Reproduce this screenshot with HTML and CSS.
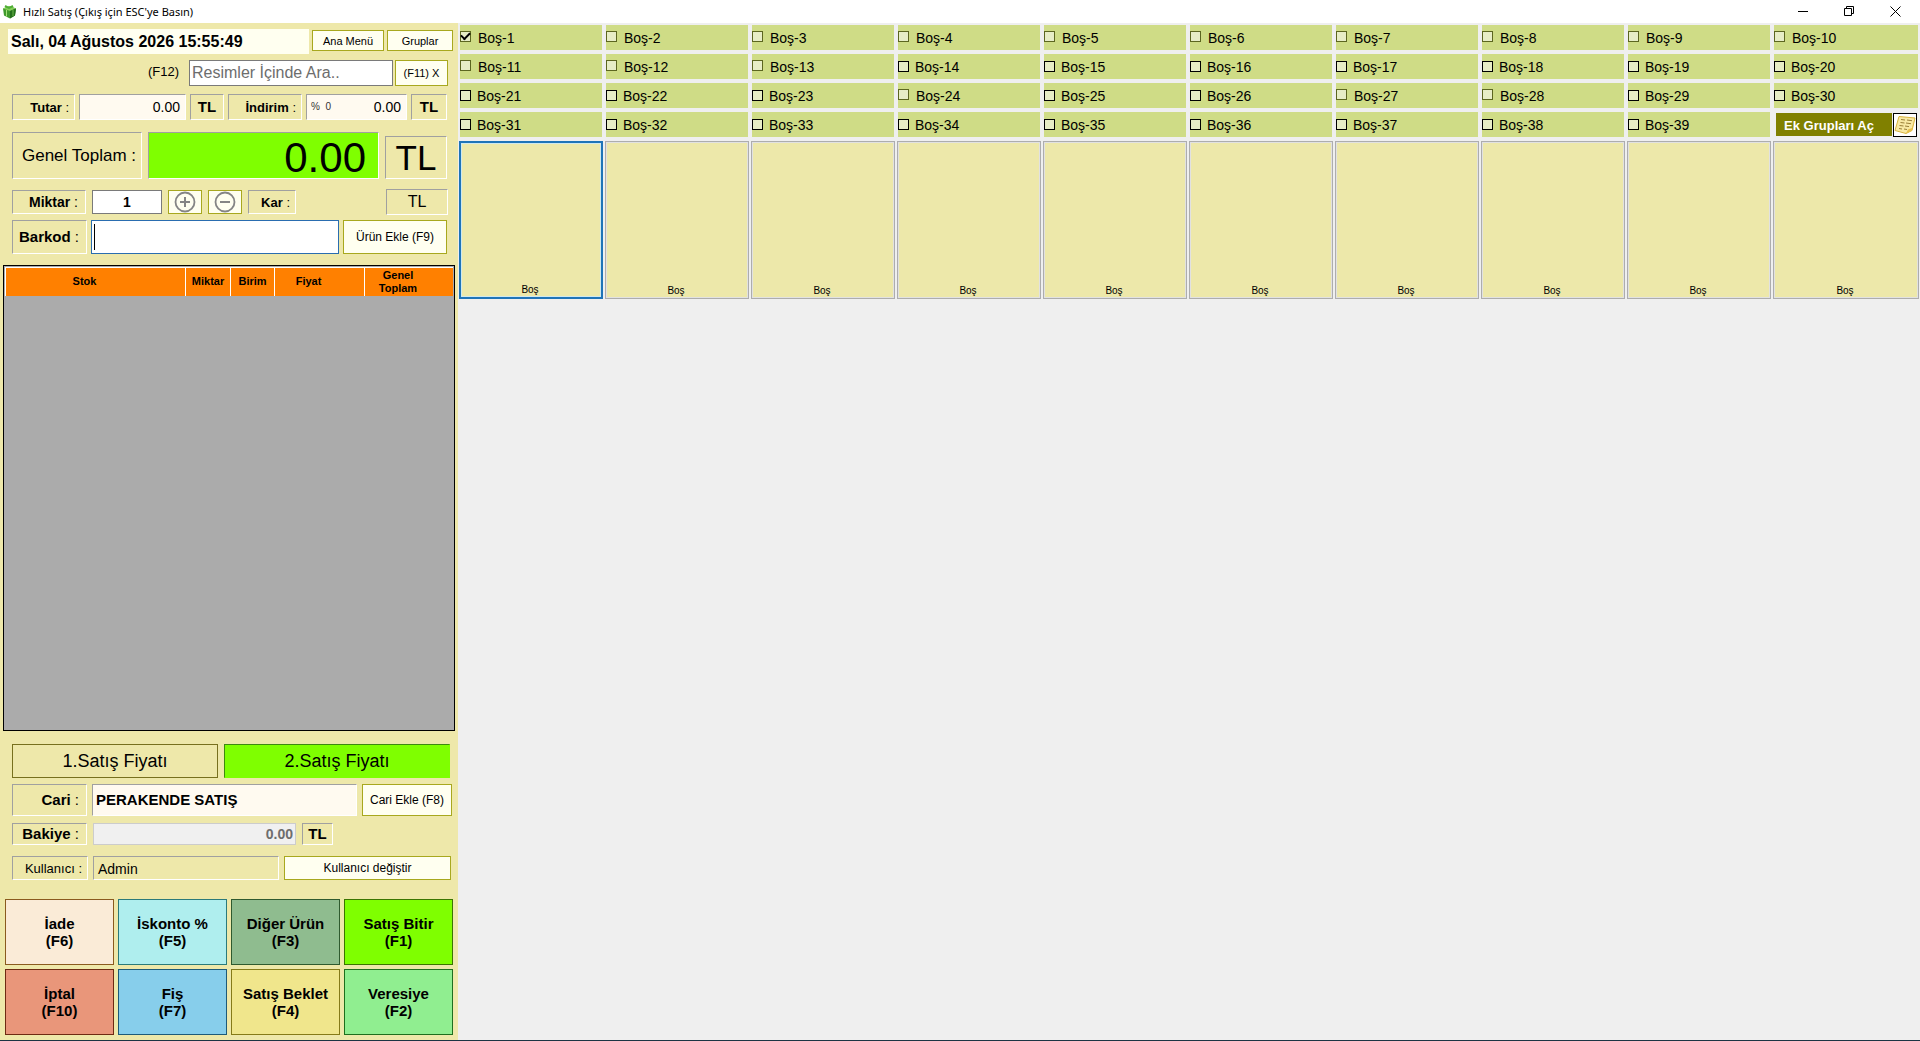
FILE: index.html
```html
<!DOCTYPE html>
<html lang="tr">
<head>
<meta charset="utf-8">
<title>Hızlı Satış</title>
<link rel="stylesheet" href="styles.css">
</head>
<body>
<header class="titlebar">
  <svg class="app-icon" width="15" height="15" viewBox="0 0 15 15" aria-hidden="true">
    <path d="M1 4.500 7.500 2 14 4.500 13 11.500 8 14.500 2 11.500z" fill="#3f9a2c"/>
    <path d="M1 4.500 7.500 2 14 4.500 8 7z" fill="#86cf5a"/>
    <path d="M8 7l6-2.500-1 7-5 3z" fill="#256f1c"/>
    <path d="M3.500 1l3.500 2 3.500-2 1 2-4.500 2-4.500-2z" fill="#4fae35"/>
    <path d="M4.500 6v6.500" stroke="#a5e07c"/>
    <path d="M11 6v6" stroke="#6dbb4a"/>
  </svg>
  <h1 class="title">Hızlı Satış (Çıkış için ESC'ye Basın)</h1>
  <div class="window-buttons">
    <button class="window-button" aria-label="Simge durumuna küçült"><svg width="11" height="11" viewBox="0 0 11 11"><path d="M0 5.500H10" stroke="#000"/></svg></button>
    <button class="window-button" aria-label="Önceki boyut"><svg width="11" height="11" viewBox="0 0 11 11"><path d="M.5 2.500H7.500V9.500H.5zM2.500 2.500V.5H9.500V7.500H7.500" fill="none" stroke="#000"/></svg></button>
    <button class="window-button" aria-label="Kapat"><svg width="11" height="11" viewBox="0 0 11 11"><path d="M.5.5l10 10M10.500.5l-10 10" stroke="#000"/></svg></button>
  </div>
</header>
<main class="workspace">
  <section class="sale">
    <div class="row row-date">
      <time class="date">Salı, 04 Ağustos 2026 15:55:49</time>
      <button class="btn small">Ana Menü</button>
      <button class="btn small">Gruplar</button>
    </div>
    <div class="row row-search">
      <label class="search-key" for="search">(F12)</label>
      <input class="field search" id="search" type="text" placeholder="Resimler İçinde Ara..">
      <button class="btn small">(F11) X</button>
    </div>
    <div class="row row-amount">
      <div class="sunken caption"><b>Tutar</b>&nbsp;:</div>
      <output class="sunken paper amount">0.00</output>
      <div class="sunken currency">TL</div>
      <div class="sunken caption"><b>İndirim</b>&nbsp;:</div>
      <output class="sunken paper amount discount"><span class="percent">%&nbsp; 0</span><span>0.00</span></output>
      <div class="sunken currency">TL</div>
    </div>
    <div class="row row-total">
      <div class="sunken total-caption">Genel Toplam&nbsp;:</div>
      <output class="sunken total">0.00</output>
      <div class="sunken total-currency">TL</div>
    </div>
    <div class="row row-quantity">
      <label class="sunken caption medium" for="quantity"><b>Miktar</b>&nbsp;:</label>
      <input class="field quantity" id="quantity" type="text" value="1">
      <button class="btn" aria-label="Artır"><svg width="22" height="22" viewBox="0 0 22 22"><circle cx="11" cy="11" r="9.500" fill="none" stroke="#858585" stroke-width="1.800"/><path d="M6 11H16M11 6V16" stroke="#858585" stroke-width="2"/></svg></button>
      <button class="btn" aria-label="Azalt"><svg width="22" height="22" viewBox="0 0 22 22"><circle cx="11" cy="11" r="9.500" fill="none" stroke="#858585" stroke-width="1.800"/><path d="M6 11H16" stroke="#858585" stroke-width="2"/></svg></button>
      <div class="sunken caption"><b>Kar</b>&nbsp;:</div>
      <div class="sunken currency profit">TL</div>
    </div>
    <div class="row row-barcode">
      <label class="sunken caption large" for="barcode"><b>Barkod</b>&nbsp;:</label>
      <div class="barcode-box"><span class="caret"></span><input class="barcode" id="barcode" type="text"></div>
      <button class="btn">Ürün Ekle (F9)</button>
    </div>
    <div class="basket">
      <table class="basket-table">
        <colgroup><col class="col-stock"><col class="col-quantity"><col class="col-unit"><col class="col-price"><col class="col-total"></colgroup>
        <thead><tr><th class="stock">Stok</th><th>Miktar</th><th>Birim</th><th class="price">Fiyat</th><th class="sum">Genel<br>Toplam</th></tr></thead>
      </table>
    </div>
    <div class="row row-price">
      <button class="price-tab">1.Satış Fiyatı</button>
      <button class="price-tab active">2.Satış Fiyatı</button>
    </div>
    <div class="row row-customer">
      <div class="sunken caption large"><b>Cari</b>&nbsp;:</div>
      <output class="sunken paper customer">PERAKENDE SATIŞ</output>
      <button class="btn">Cari Ekle (F8)</button>
    </div>
    <div class="row row-balance">
      <label class="sunken caption large" for="balance"><b>Bakiye</b>&nbsp;:</label>
      <input class="balance" id="balance" type="text" value="0.00" disabled>
      <div class="sunken currency">TL</div>
    </div>
    <div class="row row-user">
      <div class="sunken caption">Kullanıcı&nbsp;:</div>
      <output class="sunken user">Admin</output>
      <button class="btn">Kullanıcı değiştir</button>
    </div>
    <div class="actions">
      <button class="action return">İade<br>(F6)</button>
      <button class="action percent-off">İskonto %<br>(F5)</button>
      <button class="action other">Diğer Ürün<br>(F3)</button>
      <button class="action finish">Satış Bitir<br>(F1)</button>
      <button class="action cancel">İptal<br>(F10)</button>
      <button class="action receipt">Fiş<br>(F7)</button>
      <button class="action hold">Satış Beklet<br>(F4)</button>
      <button class="action credit">Veresiye<br>(F2)</button>
    </div>
  </section>
  <section class="catalog">
    <div class="groups">
      <label class="group soft"><input type="checkbox" checked>Boş-1</label>
      <label class="group soft"><input type="checkbox">Boş-2</label>
      <label class="group soft"><input type="checkbox">Boş-3</label>
      <label class="group soft"><input type="checkbox">Boş-4</label>
      <label class="group soft"><input type="checkbox">Boş-5</label>
      <label class="group soft"><input type="checkbox">Boş-6</label>
      <label class="group soft"><input type="checkbox">Boş-7</label>
      <label class="group soft"><input type="checkbox">Boş-8</label>
      <label class="group soft"><input type="checkbox">Boş-9</label>
      <label class="group soft"><input type="checkbox">Boş-10</label>
      <label class="group soft"><input type="checkbox">Boş-11</label>
      <label class="group soft"><input type="checkbox">Boş-12</label>
      <label class="group soft"><input type="checkbox">Boş-13</label>
      <label class="group"><input type="checkbox">Boş-14</label>
      <label class="group"><input type="checkbox">Boş-15</label>
      <label class="group"><input type="checkbox">Boş-16</label>
      <label class="group"><input type="checkbox">Boş-17</label>
      <label class="group"><input type="checkbox">Boş-18</label>
      <label class="group"><input type="checkbox">Boş-19</label>
      <label class="group"><input type="checkbox">Boş-20</label>
      <label class="group"><input type="checkbox">Boş-21</label>
      <label class="group"><input type="checkbox">Boş-22</label>
      <label class="group"><input type="checkbox">Boş-23</label>
      <label class="group soft"><input type="checkbox">Boş-24</label>
      <label class="group"><input type="checkbox">Boş-25</label>
      <label class="group"><input type="checkbox">Boş-26</label>
      <label class="group soft"><input type="checkbox">Boş-27</label>
      <label class="group soft"><input type="checkbox">Boş-28</label>
      <label class="group"><input type="checkbox">Boş-29</label>
      <label class="group"><input type="checkbox">Boş-30</label>
      <label class="group"><input type="checkbox">Boş-31</label>
      <label class="group"><input type="checkbox">Boş-32</label>
      <label class="group"><input type="checkbox">Boş-33</label>
      <label class="group"><input type="checkbox">Boş-34</label>
      <label class="group"><input type="checkbox">Boş-35</label>
      <label class="group"><input type="checkbox">Boş-36</label>
      <label class="group"><input type="checkbox">Boş-37</label>
      <label class="group"><input type="checkbox">Boş-38</label>
      <label class="group"><input type="checkbox">Boş-39</label>
      <div class="more">
        <button class="more-text">Ek Grupları Aç</button>
        <button class="more-icon" aria-label="Ek grup listesi"><svg width="22" height="20" viewBox="0 0 22 20"><path d="M5 1.500 21 3 18 15.500 12 18.500 1 15.500z" fill="#f8e9a4" stroke="#d9b440"/><path d="M21 3 18 15.500 12 18.500 14 14.500 18 13z" fill="#e8c04a"/><path d="M7 4.500l4 .5M13 5l5 .7M6.500 7.500l4 .5M12 8l5 .7M5.500 10.500l4 .5M11 11l4 .6M5 13.500l3 .5M10 14l3 .5" stroke="#9a8038"/></svg></button>
      </div>
    </div>
    <div class="products">
      <button class="product selected">Boş</button>
      <button class="product">Boş</button>
      <button class="product">Boş</button>
      <button class="product">Boş</button>
      <button class="product">Boş</button>
      <button class="product">Boş</button>
      <button class="product">Boş</button>
      <button class="product">Boş</button>
      <button class="product">Boş</button>
      <button class="product">Boş</button>
    </div>
  </section>
</main>
</body>
</html>
```
FILE: styles.css
```css
* { box-sizing: border-box; }

body {
  margin: 0;
  min-height: 100vh;
  display: flex;
  flex-direction: column;
  background: #efefef;
  border-bottom: 1px solid #1c3444;
  color: #000;
  font: 12px/16px "Liberation Sans", Arial, sans-serif;
}

button, input { font: inherit; color: inherit; margin: 0; padding: 0; border-radius: 0; }

/* Window frame */
.titlebar { display: flex; align-items: center; height: 23px; padding-left: 2px; background: #fff; }
.title { flex: 1; margin: 0 0 0 6px; font: 11px/16px "Noto Sans", sans-serif; }
.window-buttons { display: flex; padding-right: 2px; }
.window-button { width: 46px; height: 20px; border: 0; background: none; display: grid; place-items: center; }

.workspace { flex: 1; display: flex; }

/* Sale panel */
.sale {
  flex: none;
  width: 458px;
  display: flex;
  flex-direction: column;
  padding: 6px 3px 5px;
  background: #eee8aa;
}
.row { display: grid; padding-left: 9px; flex: none; }

.btn { border: 1px solid #a8a81e; background: #fffff0; display: grid; place-items: center; white-space: nowrap; overflow: hidden; }
.small { font-size: 11px; }
.sunken { border: 1px solid; border-color: #a0a0a0 #fff #fff #a0a0a0; display: flex; align-items: center; white-space: nowrap; }
.paper { background: #fffaf0; }
.caption { justify-content: flex-end; padding: 2px 5px 0 0; font-size: 13px; }
.medium { font-size: 14px; padding: 0 7px 0 0; }
.large { font-size: 15px; padding: 0 7px 0 0; }
.currency { justify-content: center; font-size: 15px; font-weight: bold; }
.field { border: 1px solid #7a7a7a; background: #fff; min-width: 0; }

.row-date { grid-template-columns: 301px 72px 66px; column-gap: 3px; padding-left: 5px; height: 25px; }
.row-date .btn { height: 21px; margin-top: 1px; }
.date { background: #fffff0; padding-left: 3px; font-size: 16px; font-weight: bold; line-height: 25px; }

.row-search { grid-template-columns: 167px 204px 53px; column-gap: 2px; justify-content: end; padding-right: 7px; height: 26px; margin-top: 6px; }
.search-key { font-size: 13px; line-height: 24px; justify-self: end; margin-right: 8px; }
.search { font-size: 16px; padding-left: 2px; }
.search::placeholder { color: #6d6d6d; opacity: 1; }

.row-amount { grid-template-columns: 63px 107px 34px 74px 101px 36px; column-gap: 4px; height: 26px; margin-top: 8px; }
.amount { justify-content: flex-end; padding-right: 5px; font-size: 14px; }
.discount { justify-content: space-between; padding-left: 4px; }
.percent { font-size: 10px; color: #333; }

.row-total { grid-template-columns: 130px 231px 62px; column-gap: 6px; height: 47px; margin-top: 12px; align-items: end; }
.total-caption { height: 47px; justify-content: flex-end; padding-right: 5px; font-size: 17px; }
.total { height: 47px; justify-content: flex-end; padding: 4px 12px 0 0; background: #7fff00; font-size: 42px; }
.total-currency { height: 43px; justify-content: center; font-size: 35px; }

.row-quantity { grid-template-columns: 74px 70px 34px 34px 48px 1fr; column-gap: 6px; height: 26px; margin-top: 10px; align-items: center; }
.row-quantity > * { height: 24px; }
.row-quantity .profit { justify-self: end; width: 62px; height: 26px; margin-right: 7px; font-size: 16px; font-weight: normal; }
.quantity { text-align: center; font-size: 14px; font-weight: bold; }

.row-barcode { grid-template-columns: 75px 248px 104px; height: 34px; margin-top: 5px; column-gap: 4px; }
.barcode-box { display: flex; align-items: center; border: 1px solid #2a6db0; background: #fff; }
.caret { width: 1px; height: 26px; margin-left: 2px; background: #000; }
.barcode { flex: 1; min-width: 0; border: 0; background: none; font-size: 18px; outline: 0; }

/* Basket list */
.basket { flex: 1; margin-top: 11px; border: 1px solid #000; background: #ababab; padding: 1px; }
.basket-table { width: 100%; table-layout: fixed; border-collapse: collapse; background: #ff8000; border: 1px solid #fff; border-width: 1px 0 0 1px; }
.basket-table th { height: 28px; padding: 0; border-right: 1px solid #fff; font-size: 11px; line-height: 13px; text-align: center; }
.basket-table th:last-child { border-right: 0; }
.col-stock { width: 180px; }
.col-quantity { width: 45px; }
.col-unit { width: 44px; }
.col-price { width: 90px; }
.basket-table .stock { padding-right: 22px; }
.basket-table .price { padding-right: 22px; }
.basket-table .sum { padding-right: 22px; }

.row-price { grid-template-columns: 206px 226px; column-gap: 6px; height: 34px; margin-top: 13px; }
.price-tab { border: 1px solid #77701e; background: #eee8aa; font-size: 18px; }
.active { background: #7fff00; border-color: #3d8a10 #7fff00 #7fff00 #3d8a10; }

.row-customer { grid-template-columns: 75px 265px 90px; column-gap: 5px; height: 32px; margin-top: 6px; }
.customer { padding-left: 3px; font-size: 15px; font-weight: bold; }

.row-balance { grid-template-columns: 75px 203px 31px; column-gap: 6px; height: 22px; margin-top: 7px; }
.balance { border: 1px solid #ccc; background: #f0f0f0; color: #6d6d6d; min-width: 0; padding-right: 2px; text-align: right; font-size: 14px; font-weight: bold; }

.row-user { grid-template-columns: 76px 186px 167px; column-gap: 5px; height: 24px; margin-top: 11px; }
.user { padding: 2px 0 0 4px; font-size: 14px; }

/* Function keys */
.actions { display: grid; grid-template-columns: repeat(4, 1fr); grid-auto-rows: 66px; gap: 4px; margin-top: 19px; padding: 0 2px; }
.action { border: 1px solid; color: #000; font-size: 15px; line-height: 17px; font-weight: bold; }
.return { background: #faebd7; border-color: #8a5a1e; }
.percent-off { background: #afeeee; border-color: #2b7a7a; }
.other { background: #8fbc8f; border-color: #2f5a2f; }
.finish { background: #7fff00; border-color: #3a7500; }
.cancel { background: #e9967a; border-color: #6e2a12; }
.receipt { background: #87ceeb; border-color: #1e5a78; }
.hold { background: #f0e68c; border-color: #857a18; }
.credit { background: #90ee90; border-color: #1e6e1e; }

/* Catalog */
.catalog { flex: 1; min-width: 0; }
.groups { display: grid; grid-template-columns: repeat(9, minmax(0, 142fr)) minmax(0, 144fr); grid-auto-rows: 25px; gap: 4px; padding: 2px 2px 0; }
.group { display: flex; align-items: center; gap: 6px; background: #cfdc86; font-size: 14px; padding-top: 1px; }
.group input { appearance: none; flex: none; width: 11px; height: 11px; border: 1px solid #000; background: #e7edc6; margin-bottom: 2px; }
.soft { gap: 7px; }
.group.soft input { border-color: #5c6620; margin-bottom: 4px; }
.group input:checked { display: grid; place-items: center; }
.group input:checked::before { content: ""; width: 7px; height: 4px; border: solid #000; border-width: 0 0 2px 2px; transform: rotate(-45deg); margin-bottom: 2px; }
.more { display: flex; align-items: center; padding: 0 1px 0 2px; }
.more-text { flex: 1; height: 23px; padding: 3px 10px 0 0; border: 0; background: #808000; color: #fff; font-size: 13px; font-weight: bold; white-space: nowrap; }
.more-icon { width: 24px; height: 24px; border: 1px solid #000; background: #fff; margin-left: 1px; display: grid; place-items: center; }

.products { display: grid; grid-template-columns: repeat(9, minmax(0, 144fr)) minmax(0, 146fr); gap: 2px; padding: 4px 1px 0; }
.product {
  height: 158px;
  display: flex;
  align-items: flex-end;
  justify-content: center;
  padding-right: 2px;
  border: 1px solid #adadad;
  box-shadow: inset 0 0 0 1px #e1e1e1;
  background: #ede8aa;
  font-size: 10px;
  line-height: 14px;
}
.selected { border: 2px solid #1f74b8; box-shadow: inset 0 0 0 1px #cfe9ee; }
```
